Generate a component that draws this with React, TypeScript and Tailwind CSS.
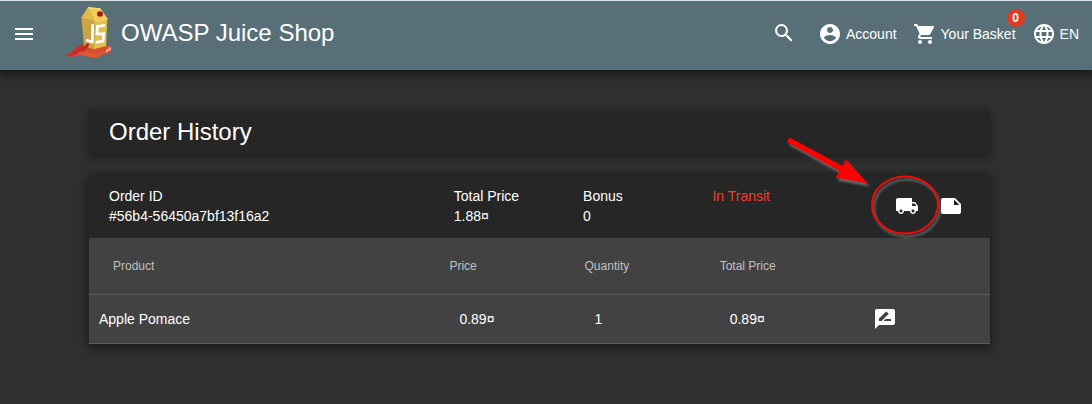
import {
  MdLanguage,
  MdMenu,
  MdNote,
  MdRateReview,
  MdSearch,
  MdShoppingCart,
} from "react-icons/md";

const items = [{ product: "Apple Pomace", price: "0.89¤", quantity: 1, total: "0.89¤" }];

function Logo() {
  return (
    <svg viewBox="0 6 180 192" className="h-16 w-[60px]" aria-hidden="true">
      <path d="M16 165 L30 160 L52 141 L70 133 L100 142 L138 137 Q150 134 155 142 Q157 152 146 160 Q132 161 122 168 Q108 178 88 171 Q60 163 38 170 Q24 172 16 165Z" fill="#d8502f" />
      <path d="M16 165 L30 160 L52 141 L66 134 L84 144 L70 156 L46 165 Q26 172 16 165Z" fill="#c92b25" />
      <path d="M52 160 Q74 148 100 160 Q118 163 136 154 Q114 178 88 171 Q68 164 52 160Z" fill="#dd5a36" />
      <path d="M64 52 L84 22 L104 62 L102 148 L72 138Z" fill="#c9a544" />
      <path d="M104 62 L142 54 L138 138 L102 148Z" fill="#e3bf4c" />
      <path d="M84 22 L122 26 L142 55 L104 63Z" fill="#f2cc56" />
      <path d="M84 22 L104 62 L64 53Z" fill="#e0b94c" />
      <path d="M84 21 L122 25 L121 28 L85 25Z" fill="#f9e08a" />
      <path d="M104 62 L142 54 L142 58 L104 66Z" fill="#f7d978" />
      <ellipse cx="120" cy="42" rx="9" ry="8" fill="#a91f19" />
      <path d="M117 38 L124 46 M123 37 L118 46" stroke="#741713" strokeWidth="2" />
      <path d="M98 73 L97 126 L78 120" fill="none" stroke="#fff" strokeWidth="8" />
      <path d="M135 76 L112 79 L111 102 L131 101 L129 123 L107 127" fill="none" stroke="#fff" strokeWidth="8" />
      <path d="M76 133 L86 129 L87 136 L81 143 L75 144Z" fill="#b8241d" />
      <path d="M139 155 L144 148 M149 150 L150 144" stroke="#fff3ec" strokeWidth="4" strokeLinecap="round" />
    </svg>
  );
}

function AccountIcon() {
  return (
    <svg viewBox="0 0 24 24" fill="currentColor" className="size-6" aria-hidden="true">
      <path d="M12 2C6.48 2 2 6.48 2 12s4.480 10 10 10 10-4.480 10-10S17.520 2 12 2zm0 3c1.660 0 3 1.340 3 3s-1.340 3-3 3-3-1.340-3-3 1.340-3 3-3zm0 14.200c-2.500 0-4.710-1.280-6-3.220.030-1.990 4-3.080 6-3.080 1.990 0 5.970 1.090 6 3.080-1.290 1.940-3.500 3.220-6 3.220z" />
    </svg>
  );
}

function TruckIcon() {
  return (
    <svg viewBox="0 0 24 24" fill="currentColor" className="size-6" aria-hidden="true">
      <path d="M20 8h-3V4H3c-1.100 0-2 .9-2 2v11h2c0 1.660 1.340 3 3 3s3-1.340 3-3h6c0 1.660 1.340 3 3 3s3-1.340 3-3h2v-5l-3-4zM6 18.500c-.83 0-1.500-.67-1.500-1.500s.67-1.500 1.500-1.500 1.500.67 1.500 1.500-.67 1.500-1.500 1.500zm13.500-9l1.960 2.500H17V9.500h2.500zm-1.500 9c-.83 0-1.500-.67-1.500-1.500s.67-1.500 1.500-1.500 1.500.67 1.500 1.500-.67 1.500-1.500 1.500z" />
    </svg>
  );
}

function TrackingCallout() {
  return (
    <svg
      viewBox="780 132 165 113"
      className="pointer-events-none absolute -top-[54px] -left-[107px] z-10 h-[113px] w-[165px] max-w-none drop-shadow-[2px_3px_1px_rgba(150,150,150,0.6)]"
      aria-hidden="true"
    >
      <path d="M789.500 137.500 L842.500 166 L846 159.500 L867.500 183.500 L835.500 177.500 L839.500 171 L787 142Z" fill="#fe0000" />
      <ellipse cx="905" cy="205" rx="33" ry="28.500" fill="none" stroke="#f40808" strokeWidth="2" />
    </svg>
  );
}

const iconButton = "flex size-10 items-center justify-center rounded-full text-2xl";
const navButton = "flex items-center gap-1";

export default function App() {
  return (
    <div className="min-h-screen bg-[#303030] font-['Liberation_Sans',Arial,sans-serif] text-sm text-white">
      <header className="relative flex items-center justify-between border-t border-[#dbe0e2] bg-[#586f78] pr-[13px] pb-[3px] shadow-[0_2px_10px_3px_rgba(0,0,0,0.5)]">
        <div className="flex h-[66px] items-center">
          <button type="button" aria-label="Open menu" className="ml-3 text-2xl">
            <MdMenu />
          </button>
          <a href="#home" className="ml-6 flex items-center gap-px">
            <Logo />
            <span className="pb-0.5 text-2xl">OWASP Juice Shop</span>
          </a>
        </div>
        <nav className="flex items-center gap-4">
          <button type="button" aria-label="Search" className="mr-1.5 pb-0.5 text-2xl">
            <MdSearch />
          </button>
          <button type="button" className={navButton}>
            <AccountIcon />
            Account
          </button>
          <button type="button" className={`${navButton} relative`}>
            <MdShoppingCart className="size-6" />
            Your Basket
            <span className="absolute -top-[13px] -right-[9px] flex size-[18px] items-center justify-center rounded-full bg-[#df3a22] text-xs font-bold">
              0
            </span>
          </button>
          <button type="button" className={navButton}>
            <MdLanguage className="size-6" />
            EN
          </button>
        </nav>
      </header>

      <main className="flex flex-col gap-5 pt-10 pr-[102px] pb-[60px] pl-[89px]">
        <section className="bg-[#262626] px-5 py-1.5 shadow-[0_3px_8px_1px_rgba(0,0,0,0.35)]">
          <h1 className="text-2xl">Order History</h1>
        </section>

        <section className="bg-[#424242] shadow-[0_3px_10px_1px_rgba(0,0,0,0.5)]">
          <div className="grid grid-cols-[40%_15%_15%_1fr] bg-[#262626] py-3 pr-[19px] pl-5 leading-5">
            <div>
              <div>Order ID</div>
              <div>#56b4-56450a7bf13f16a2</div>
            </div>
            <div>
              <div>Total Price</div>
              <div>1.88¤</div>
            </div>
            <div>
              <div>Bonus</div>
              <div>0</div>
            </div>
            <div className="flex justify-between">
              <div className="text-[#ed402e]">In Transit</div>
              <div className="flex gap-1">
                <div className="relative">
                  <button type="button" aria-label="Track order" className={iconButton}>
                    <TruckIcon />
                  </button>
                  <TrackingCallout />
                </div>
                <button type="button" aria-label="Print order confirmation" className={iconButton}>
                  <MdNote />
                </button>
              </div>
            </div>
          </div>

          <table className="w-full table-fixed border-collapse text-left">
            <thead>
              <tr className="h-14 border-b border-[#5c5c5c] text-xs text-[#c0c0c0]">
                <th className="w-[40%] pl-6 font-normal">Product</th>
                <th className="w-[15%] font-normal">Price</th>
                <th className="w-[15%] font-normal">Quantity</th>
                <th className="w-[15%] font-normal">Total Price</th>
                <td />
              </tr>
            </thead>
            <tbody>
              {items.map((item) => (
                <tr key={item.product} className="h-[49px] border-b border-[#5c5c5c]">
                  <td className="pl-2.5">{item.product}</td>
                  <td className="pl-2.5">{item.price}</td>
                  <td className="pl-2.5">{item.quantity}</td>
                  <td className="pl-2.5">{item.total}</td>
                  <td className="pl-2.5">
                    <button type="button" aria-label="Write a review" className={iconButton}>
                      <MdRateReview />
                    </button>
                  </td>
                </tr>
              ))}
            </tbody>
          </table>
        </section>
      </main>
    </div>
  );
}
